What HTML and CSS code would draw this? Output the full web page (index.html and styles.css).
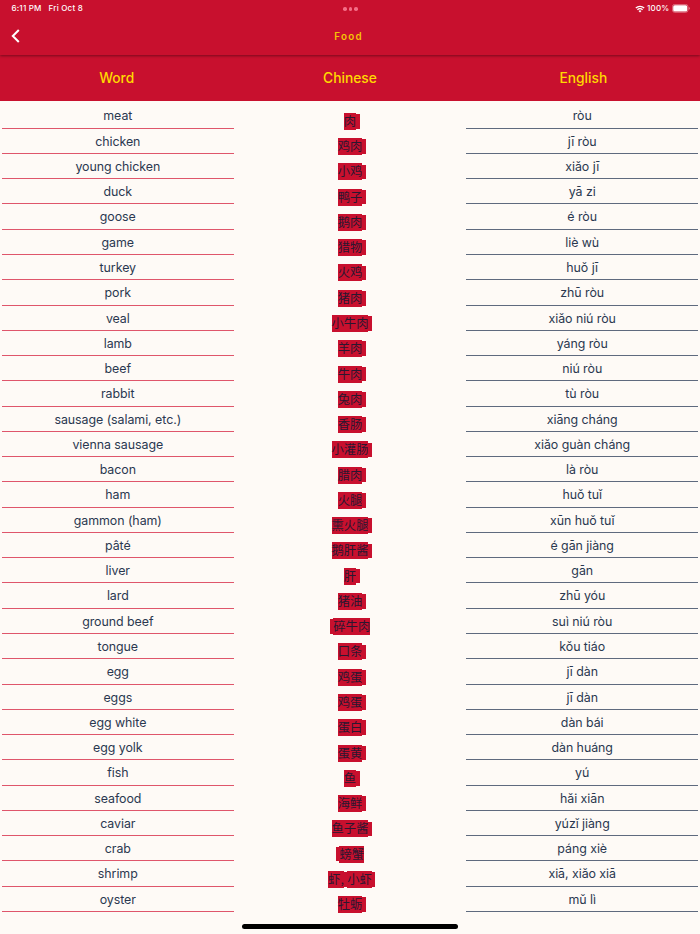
FILE: index.html
```html
<!DOCTYPE html>
<html lang="en">
<head>
<meta charset="utf-8">
<title>Food</title>
<link rel="stylesheet" href="styles.css">
</head>
<body>
<header class="appbar">
  <div class="status">
    <div class="status-left"><span class="time">6:11 PM</span><span class="date">Fri Oct 8</span></div>
    <div class="dots"><i></i><i></i><i></i></div>
    <div class="status-right">
      <svg class="wifi" viewBox="0 0 10 8"><path d="M.8 3A6 6 0 0 1 9.2 3M2.4 4.8A3.7 3.7 0 0 1 7.6 4.8" fill="none" stroke="#fff" stroke-width="1.25"/><path d="M5 7.6L3.5 6A2.1 2.1 0 0 1 6.5 6Z" fill="#fff"/></svg>
      <span class="percent">100%</span>
      <svg class="battery" viewBox="0 0 18 9"><rect x=".4" y=".4" width="15.6" height="7.9" rx="2.3" fill="none" stroke="#e7929d" stroke-width=".7"/><rect x="1.2" y="1.2" width="14" height="6.3" rx="1.5" fill="#fff"/><path d="M16.8 3v2.8q1-.4 1-1.4t-1-1.4z" fill="#e7929d"/></svg>
    </div>
  </div>
  <nav class="nav">
    <svg class="back" viewBox="0 0 9 14"><path d="M7.800 1L1.800 7l6 6" fill="none" stroke="#fff" stroke-width="2"/></svg>
    <h1 class="title">Food</h1>
  </nav>
</header>
<div class="heads"><h2>Word</h2><h2>Chinese</h2><h2>English</h2></div>
<main class="list">
<div class="row"><p class="word">meat</p><p class="zh"><b>肉</b><i class="end"></i></p><p class="pinyin">ròu</p></div>
<div class="row"><p class="word">chicken</p><p class="zh"><b>鸡肉</b><i class="end"></i></p><p class="pinyin">jī ròu</p></div>
<div class="row"><p class="word">young chicken</p><p class="zh"><b>小鸡</b><i class="end"></i></p><p class="pinyin">xiǎo jī</p></div>
<div class="row"><p class="word">duck</p><p class="zh"><b>鸭子</b><i class="end"></i></p><p class="pinyin">yā zi</p></div>
<div class="row"><p class="word">goose</p><p class="zh"><b>鹅肉</b><i class="end"></i></p><p class="pinyin">é ròu</p></div>
<div class="row"><p class="word">game</p><p class="zh"><b>猎物</b><i class="end"></i></p><p class="pinyin">liè wù</p></div>
<div class="row"><p class="word">turkey</p><p class="zh"><b>火鸡</b><i class="end"></i></p><p class="pinyin">huǒ jī</p></div>
<div class="row"><p class="word">pork</p><p class="zh"><b>猪肉</b><i class="end"></i></p><p class="pinyin">zhū ròu</p></div>
<div class="row"><p class="word">veal</p><p class="zh"><b>小牛肉</b><i class="end"></i></p><p class="pinyin">xiǎo niú ròu</p></div>
<div class="row"><p class="word">lamb</p><p class="zh"><b>羊肉</b><i class="end"></i></p><p class="pinyin">yáng ròu</p></div>
<div class="row"><p class="word">beef</p><p class="zh"><b>牛肉</b><i class="end"></i></p><p class="pinyin">niú ròu</p></div>
<div class="row"><p class="word">rabbit</p><p class="zh"><b>兔肉</b><i class="end"></i></p><p class="pinyin">tù ròu</p></div>
<div class="row"><p class="word">sausage (salami, etc.)</p><p class="zh"><b>香肠</b><i class="end"></i></p><p class="pinyin">xiāng cháng</p></div>
<div class="row"><p class="word">vienna sausage</p><p class="zh"><b>小灌肠</b><i class="end"></i></p><p class="pinyin">xiǎo guàn cháng</p></div>
<div class="row"><p class="word">bacon</p><p class="zh"><b>腊肉</b><i class="end"></i></p><p class="pinyin">là ròu</p></div>
<div class="row"><p class="word">ham</p><p class="zh"><b>火腿</b><i class="end"></i></p><p class="pinyin">huǒ tuǐ</p></div>
<div class="row"><p class="word">gammon (ham)</p><p class="zh"><b>熏火腿</b><i class="end"></i></p><p class="pinyin">xūn huǒ tuǐ</p></div>
<div class="row"><p class="word">pâté</p><p class="zh"><b>鹅肝酱</b><i class="end"></i></p><p class="pinyin">é gān jiàng</p></div>
<div class="row"><p class="word">liver</p><p class="zh"><b>肝</b><i class="end"></i></p><p class="pinyin">gān</p></div>
<div class="row"><p class="word">lard</p><p class="zh"><b>猪油</b><i class="end"></i></p><p class="pinyin">zhū yóu</p></div>
<div class="row"><p class="word">ground beef</p><p class="zh"><i></i><b>碎牛肉</b></p><p class="pinyin">suì niú ròu</p></div>
<div class="row"><p class="word">tongue</p><p class="zh"><b>口条</b><i class="end"></i></p><p class="pinyin">kǒu tiáo</p></div>
<div class="row"><p class="word">egg</p><p class="zh"><b>鸡蛋</b><i class="end"></i></p><p class="pinyin">jī dàn</p></div>
<div class="row"><p class="word">eggs</p><p class="zh"><b>鸡蛋</b><i class="end"></i></p><p class="pinyin">jī dàn</p></div>
<div class="row"><p class="word">egg white</p><p class="zh"><b>蛋白</b><i class="end"></i></p><p class="pinyin">dàn bái</p></div>
<div class="row"><p class="word">egg yolk</p><p class="zh"><b>蛋黄</b><i class="end"></i></p><p class="pinyin">dàn huáng</p></div>
<div class="row"><p class="word">fish</p><p class="zh"><b>鱼</b><i class="end"></i></p><p class="pinyin">yú</p></div>
<div class="row"><p class="word">seafood</p><p class="zh"><b>海鲜</b><i class="end"></i></p><p class="pinyin">hǎi xiān</p></div>
<div class="row"><p class="word">caviar</p><p class="zh"><b>鱼子酱</b><i class="end"></i></p><p class="pinyin">yúzǐ jiàng</p></div>
<div class="row"><p class="word">crab</p><p class="zh"><i></i><b>螃蟹</b></p><p class="pinyin">páng xiè</p></div>
<div class="row"><p class="word">shrimp</p><p class="zh"><b>虾,</b><i></i><b>小虾</b><i class="end"></i></p><p class="pinyin">xiā, xiǎo xiā</p></div>
<div class="row"><p class="word">oyster</p><p class="zh"><b>牡蛎</b><i class="end"></i></p><p class="pinyin">mǔ lì</p></div>
</main>
<div class="home"></div>
</body>
</html>
```

FILE: styles.css
```css
* { box-sizing: border-box; margin: 0; padding: 0; }
body {
  width: 700px;
  height: 934px;
  overflow: hidden;
  background: #fefaf6;
  color: #2a3850;
  font-family: Inter, "Noto Sans CJK SC", sans-serif;
}
.appbar {
  position: relative;
  height: 55px;
  background: #c8102e;
  color: #fff;
  box-shadow: 0 1px 2.5px rgba(0, 0, 0, .4);
}
.status {
  display: grid;
  grid-template-columns: 1fr auto 1fr;
  align-items: center;
  height: 17px;
  padding: 0 10.500px 0 11.500px;
  font-size: 8px;
  font-weight: 500;
  line-height: 17px;
}
.status-left { display: flex; gap: 7px; letter-spacing: .2px; }
.status-right { display: flex; justify-content: flex-end; align-items: center; gap: 2.200px; }
.percent { letter-spacing: .15px; }
.dots { display: flex; gap: 2px; padding-top: 1px; }
.dots i { width: 3.600px; height: 3.600px; border-radius: 50%; background: #f46f87; }
.wifi { width: 10px; height: 8px; }
.battery { width: 18px; height: 9px; }
.nav {
  display: grid;
  grid-template-columns: 30px 1fr 30px;
  align-items: center;
  height: 38px;
}
.back { width: 9px; height: 14px; margin-left: 11px; }
.title {
  padding-right: 3px;
  color: #f5c405;
  font-size: 9.800px;
  font-weight: 600;
  letter-spacing: 1.300px;
  text-align: center;
}
.heads {
  display: grid;
  grid-template-columns: repeat(3, 1fr);
  height: 46.300px;
  background: #c8102e;
  color: #ffd900;
  text-align: center;
}
.heads h2 { font-size: 13.800px; font-weight: 550; line-height: 46px; }
.list { padding: 2.100px 1.700px 0; }
.row {
  display: grid;
  grid-template-columns: repeat(3, 1fr);
  height: 25.270px;
}
.word, .pinyin {
  height: 25.270px;
  border-bottom: 1px solid #df566b;
  font-size: 12.400px;
  line-height: 26.400px;
  letter-spacing: -.05px;
  text-align: center;
  white-space: nowrap;
}
.pinyin { border-color: #5f6a7e; }
.zh {
  display: flex;
  justify-content: center;
  align-items: center;
  height: 17px;
  margin-top: 9.500px;
}
.zh b {
  height: 17px;
  background: #c8102e;
  color: #2b1730;
  font: 400 12.300px/17px "Noto Sans CJK SC", sans-serif;
}
.zh i { width: 3.500px; height: 14.600px; background: #c8102e; }
.zh .end { margin-right: -3.500px; }
.home {
  position: absolute;
  left: 242px;
  top: 924.300px;
  width: 216px;
  height: 4.500px;
  border-radius: 3px;
  background: #000;
}
```
